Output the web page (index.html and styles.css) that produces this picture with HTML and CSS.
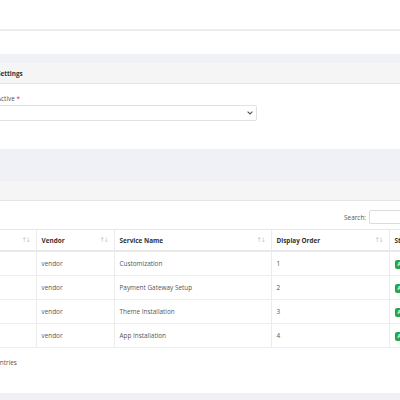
FILE: index.html
```html
<!DOCTYPE html>
<html lang="en">
<head>
<meta charset="UTF-8" />
<meta name="viewport" content="width=device-width, initial-scale=1" />
<title>Vendor Services</title>
<link rel="stylesheet" href="styles.css">
</head>
<body>

<header class="topbar"></header>
<div class="page-head"></div>

<main class="content">
  <div class="wrap">

    <div class="top-row">
      <aside class="card side-card">
        <div class="card-header">Info</div>
      </aside>

      <section class="card">
        <div class="card-header">Settings</div>
        <div class="card-body">
          <div class="form-row">
            <div class="form-group">
              <label class="form-label" for="isActive">Active <span class="required">*</span></label>
              <div class="select-wrap">
                <select class="form-select" id="isActive">
                  <option value=""></option>
                  <option value="1">Yes</option>
                  <option value="0">No</option>
                </select>
                <svg class="select-arrow" width="6" height="4" viewBox="0 0 6 4">
                  <path d="M0.6 0.6 L3 3 L5.4 0.6" fill="none" stroke="#555" stroke-width="1.1" />
                </svg>
              </div>
            </div>
          </div>
        </div>
      </section>
    </div>

    <section class="card table-card">
      <div class="card-header">Service List</div>
      <div class="card-body">
        <div class="dt-top">
          <label class="dt-search-label" for="search">Search:</label>
          <input class="dt-search" id="search" type="search" />
        </div>

        <table class="dt-table">
          <colgroup>
            <col class="col-id" />
            <col class="col-vendor" />
            <col class="col-service" />
            <col class="col-order" />
            <col class="col-status" />
            <col class="col-action" />
          </colgroup>
          <thead>
            <tr>
              <th><div class="th-inner">#<span class="sort">↑↓</span></div></th>
              <th><div class="th-inner">Vendor<span class="sort">↑↓</span></div></th>
              <th><div class="th-inner">Service Name<span class="sort">↑↓</span></div></th>
              <th><div class="th-inner">Display Order<span class="sort">↑↓</span></div></th>
              <th><div class="th-inner">Status<span class="sort">↑↓</span></div></th>
              <th><div class="th-inner">Action</div></th>
            </tr>
          </thead>
          <tbody>
            <tr>
              <td>1</td>
              <td>vendor</td>
              <td>Customization</td>
              <td>1</td>
              <td><span class="badge">Active</span></td>
              <td>Edit</td>
            </tr>
            <tr>
              <td>2</td>
              <td>vendor</td>
              <td>Payment Gateway Setup</td>
              <td>2</td>
              <td><span class="badge">Active</span></td>
              <td>Edit</td>
            </tr>
            <tr>
              <td>3</td>
              <td>vendor</td>
              <td>Theme Installation</td>
              <td>3</td>
              <td><span class="badge">Active</span></td>
              <td>Edit</td>
            </tr>
            <tr>
              <td>4</td>
              <td>vendor</td>
              <td>App Installation</td>
              <td>4</td>
              <td><span class="badge">Active</span></td>
              <td>Edit</td>
            </tr>
          </tbody>
        </table>

        <div class="dt-info">Showing 1 to 4 of 4 entries</div>
      </div>
    </section>

  </div>
</main>

</body>
</html>
```

FILE: styles.css
```css
body {
  margin: 0;
  font-family: 'Open Sans', 'Noto Sans', sans-serif;
  font-size: 6.4px;
  color: #555;
  background-color: #fff;
  overflow: hidden;
}
.topbar {
  height: 29px;
  border-bottom: 2px solid #ececf1;
}
.page-head {
  height: 23px;
}
.content {
  background-color: #f0f1f6;
  padding: 9px 0 20px;
}
.wrap {
  margin-left: -72px;
  width: 608px;
}
.top-row {
  display: grid;
  grid-template-columns: 55px 1fr;
  gap: 5px;
  margin-bottom: 32px;
}
.card {
  background-color: #fff;
}
.card-header {
  height: 20px;
  padding: 0 9px;
  display: flex;
  align-items: center;
  background-color: #f5f5f5;
  border-bottom: 1px solid #e4e4e4;
  font-weight: 700;
  color: #333;
}
.card-body {
  padding: 10px 9px 14px;
}
.table-card .card-header {
  height: 19px;
  padding: 0 10px;
}
.table-card .card-body {
  padding: 9px 10px 26px;
}
.form-row {
  display: grid;
  grid-template-columns: 1fr 1fr;
  gap: 10px;
}
.form-label {
  display: block;
  line-height: 9px;
  margin-bottom: 2px;
}
.required {
  color: #e3342f;
}
.select-wrap {
  position: relative;
  margin-bottom: 14px;
}
.form-select {
  display: block;
  box-sizing: border-box;
  width: 100%;
  height: 16px;
  padding: 0 12px 0 5px;
  font: inherit;
  color: #555;
  background-color: #fff;
  border: 1px solid #e2e2e2;
  border-radius: 2px;
  appearance: none;
  -webkit-appearance: none;
}
.select-arrow {
  position: absolute;
  right: 4px;
  top: 6px;
  pointer-events: none;
}
.dt-top {
  display: flex;
  justify-content: flex-end;
  align-items: center;
  gap: 3px;
  height: 14px;
  margin-bottom: 5px;
}
.dt-search {
  box-sizing: border-box;
  width: 157px;
  height: 14px;
  border: 1px solid #dcdcdc;
  border-radius: 2px;
  font: inherit;
}
.dt-table {
  width: 100%;
  border-collapse: collapse;
  table-layout: fixed;
}
.col-id { width: 98px; }
.col-vendor { width: 78px; }
.col-service { width: 157px; }
.col-order { width: 118px; }
.col-status { width: 70px; }
.dt-table th,
.dt-table td {
  padding: 0 5px;
  text-align: left;
  border-left: 1px solid #ececec;
}
.dt-table th:first-child,
.dt-table td:first-child {
  border-left: none;
}
.dt-table th {
  height: 20px;
  font-weight: 700;
  color: #333;
  border-top: 1px solid #e6e6e6;
  border-bottom: 2px solid #e8e8e8;
}
.th-inner {
  display: flex;
  justify-content: space-between;
  align-items: center;
}
.sort {
  font-family: 'DejaVu Sans', sans-serif;
  font-size: 6.5px;
  font-weight: 400;
  color: #c4c4c4;
  letter-spacing: -1.5px;
  padding-right: 1px;
}
.dt-table td {
  height: 23px;
  border-bottom: 1px solid #ededed;
}
.badge {
  display: inline-block;
  padding: 0 3px;
  line-height: 9px;
  border-radius: 2px;
  background-color: #28a745;
  color: #fff;
  font-weight: 700;
  font-size: 5.6px;
}
.dt-info {
  margin-top: 10px;
  line-height: 9px;
}
```
